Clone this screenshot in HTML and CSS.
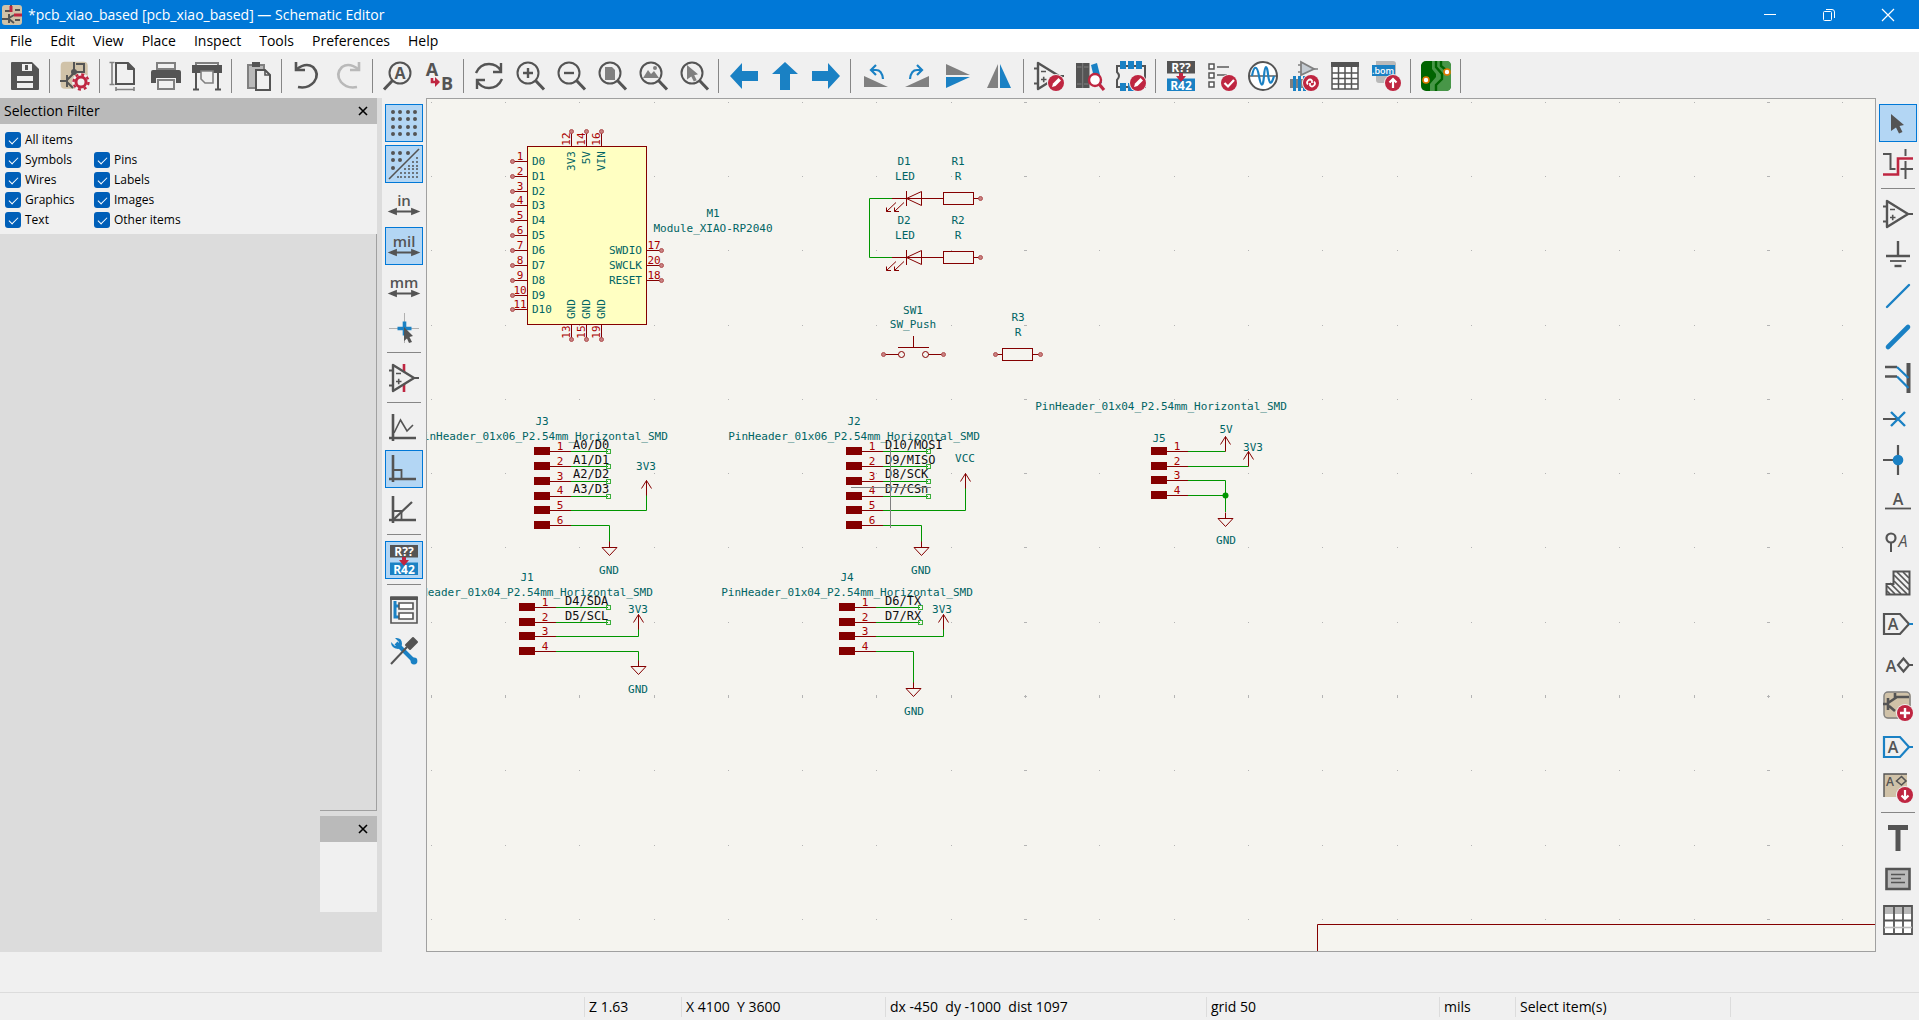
FILE: index.html
```html
<!DOCTYPE html>
<html lang="en">
<head>
<meta charset="utf-8">
<title>*pcb_xiao_based [pcb_xiao_based] — Schematic Editor</title>
<link rel="stylesheet" href="styles.css">
</head>
<body>
<svg class="sprite" aria-hidden="true">
  <defs>
    <g id="lens"><circle cx="13" cy="12" r="10.5" fill="none" stroke="#545454" stroke-width="2"/><path d="M20.5 19.5L29 28.5" stroke="#545454" stroke-width="3"/></g>
    <g id="opamp"><path d="M4 2V28L25 15Z" fill="none" stroke="#545454" stroke-width="2.4" stroke-linejoin="round"/><path d="M0 7.500H4M0 22.500H4M25 15H30" stroke="#545454" stroke-width="1.800"/><path d="M7 10.500H12M7 18.500H12.500M9.700 15.800V21.300" stroke="#545454" stroke-width="1.600"/></g>
    <g id="annotate"><rect x="1" y="0" width="28" height="12.500" fill="#545454"/><rect x="1" y="17.500" width="28" height="12.500" fill="#1a81c4"/><text x="15" y="11" class="ic-tag">R??</text><text x="15" y="29" class="ic-tag">R42</text><path d="M13 12H17V15H20L15 21L10 15H13Z" fill="#bf2641"/></g>
    <g id="badge"><circle cx="22" cy="22" r="9" fill="#f0f0f0"/><circle cx="22" cy="22" r="8" fill="#bf2641"/></g>
    <g id="pencil"><path d="M18 26L19 22.500L24.500 17L27 19.500L21.500 25Z" fill="#fff"/></g>
    <g id="sheet"><rect x="0.700" y="0.700" width="27" height="27" rx="4" fill="#d0c2a8"/></g>
    <path id="pointer" d="M0 0L13 11L8.500 12L11.500 18L8 19.500L5 13.500L0 17Z"/>
    <path id="axes" d="M4 1V28M0 25H27" fill="none" stroke="#545454" stroke-width="2.600"/>
    <path id="span" d="M5 21.500H25M7 19L1 21.500L7 24ZM23 19L29 21.500L23 24Z" fill="#545454" stroke="#545454" stroke-width="1.800"/>

    <g id="power" class="part"><path d="M0 15V0M-5 8L0 0L5 8"/></g>
    <g id="ground" class="part"><path d="M0 -6V0M-7.500 0H7.500L0 8Z"/></g>
    <g id="pin-end"><circle r="2" class="pin-end"/></g>
    <g id="pad"><rect x="-37" y="-4.500" width="16" height="8" fill="#840000"/><path class="part" d="M-21 0H0"/></g>
    <rect id="net-end" x="-1.500" y="-2" width="4" height="4" class="net-end"/>
    <g id="led" class="part"><path d="M0 0H51M14.500 -7.500V7.500M14.500 0L29.500 -7V7ZM4 4L-5.500 13M-5.500 9V13H-1M12 4L2.500 13M2.500 9V13H7"/><rect x="51.500" y="-6" width="30" height="12"/><path d="M82 0H88.500"/></g>
  </defs>
</svg>

<header class="titlebar">
  <svg class="app-icon" width="20" height="20" viewBox="0 0 20 20"><rect width="20" height="20" rx="3" fill="#d0c2a8"/><path d="M9 0V6H3M0 14H7M7 9V18M7 13L12 10M7 14L12 18" stroke="#545454" stroke-width="2" fill="none"/><path d="M9 1V7M12 10H20" stroke="#bf2641" stroke-width="3"/><path d="M13 5H18M13 15H18" stroke="#545454" stroke-width="2"/></svg>
  <h1 class="title">*pcb_xiao_based [pcb_xiao_based] — Schematic Editor</h1>
  <button class="win" aria-label="Minimize"><svg width="14" height="14"><path d="M1 6.500H13" stroke="#fff"/></svg></button>
  <button class="win" aria-label="Restore"><svg width="14" height="14" fill="none" stroke="#fff"><rect x="1.500" y="3.500" width="8" height="9" rx="1"/><path d="M4 1.500H10Q12.500 1.500 12.500 4V10"/></svg></button>
  <button class="win" aria-label="Close"><svg width="14" height="14"><path d="M1 1L13 13M13 1L1 13" stroke="#fff" stroke-width="1.200"/></svg></button>
</header>

<nav class="menubar">
  <button>File</button><button>Edit</button><button>View</button><button>Place</button><button>Inspect</button><button>Tools</button><button>Preferences</button><button>Help</button>
</nav>

<div class="toolbar" role="toolbar" aria-label="Main">
  <button class="tool" aria-label="Save"><svg class="ic" viewBox="0 0 30 30"><path d="M1 2Q1 1 2 1H22L29 8V28Q29 29 28 29H2Q1 29 1 28Z" fill="#545454"/><path d="M12 3H22V10H12Z" fill="#f0f0f0"/><path d="M15 4H18V9H15Z" fill="#545454"/><path d="M7 15H23V20H7ZM7 22H23V27H7Z" fill="#f0f0f0"/></svg></button>
  <i class="sep"></i>
  <button class="tool" aria-label="Schematic setup"><svg class="ic" viewBox="0 0 30 30"><use href="#sheet"/><path d="M14 1V11M14 11H24V3H16M7 14V26M0 20H7M7 19L14 12M7 21L13 27" stroke="#545454" stroke-width="2" fill="none"/><circle cx="14" cy="11" r="3" fill="#545454"/><circle cx="21" cy="21" r="7" fill="#f0f0f0" stroke="#f0f0f0" stroke-width="4"/><circle cx="21" cy="21" r="5" fill="none" stroke="#bf2641" stroke-width="3"/><circle cx="21" cy="21" r="7.500" fill="none" stroke="#bf2641" stroke-width="2.400" stroke-dasharray="3 2.890"/></svg></button>
  <i class="sep"></i>
  <button class="tool" aria-label="Page settings"><svg class="ic" viewBox="0 0 30 30" fill="none" stroke="#545454"><path d="M6 2H18L24 8V23H6Z" stroke-width="2"/><path d="M17.500 2V8.500H24" fill="#545454"/><path d="M2 1.500V23.500M-0.500 1.500H4.500M-0.500 23.500H4.500M6 28.500H24M6 26V30M24 26V30" stroke="#808080" stroke-width="1.600"/></svg></button>
  <button class="tool" aria-label="Print"><svg class="ic" viewBox="0 0 30 30"><path d="M6 2H24V8H6Z" fill="none" stroke="#808080" stroke-width="2"/><path d="M2 9H28Q30 9 30 11V22H25V17H5V22H0V11Q0 9 2 9Z" fill="#545454"/><path d="M7 19H23V28H7Z" fill="#f0f0f0" stroke="#808080" stroke-width="2"/></svg></button>
  <button class="tool" aria-label="Plot"><svg class="ic" viewBox="0 0 30 30"><path d="M4 4V2H26V4" fill="none" stroke="#808080" stroke-width="2"/><path d="M0 4H30V12H0Z" fill="#545454"/><path d="M4 12V28M26 12V28M1 28.500H7M23 28.500H29" stroke="#545454" stroke-width="2"/><path d="M9 10H21V22H13L9 18Z" fill="#f0f0f0" stroke="#808080" stroke-width="1.600"/></svg></button>
  <i class="sep"></i>
  <button class="tool" aria-label="Paste"><svg class="ic" viewBox="0 0 30 30"><path d="M6 4H22V27H6Z" fill="#b9b9b9" stroke="#808080" stroke-width="2"/><path d="M10 1H18V6H10Z" fill="#545454"/><path d="M14 9H23L28 14V29H14Z" fill="#f0f0f0" stroke="#545454" stroke-width="2"/><path d="M23 9V14H28" fill="none" stroke="#545454" stroke-width="1.600"/></svg></button>
  <i class="sep"></i>
  <button class="tool" aria-label="Undo"><svg class="ic" viewBox="0 0 30 30" fill="none" stroke="#545454" stroke-width="2.600"><path d="M4 1V9H13"/><path d="M4 8.500Q14 1 21 6Q28 13 22 21Q16 28 6 26"/></svg></button>
  <button class="tool" aria-label="Redo" disabled><svg class="ic" viewBox="0 0 30 30" fill="none" stroke="#b9b9b9" stroke-width="2.600"><path d="M26 1V9H17"/><path d="M26 8.500Q16 1 9 6Q2 13 8 21Q14 28 24 26"/></svg></button>
  <i class="sep"></i>
  <button class="tool" aria-label="Find"><svg class="ic" viewBox="0 0 30 30"><g transform="matrix(-1 0 0 1 30 0)"><use href="#lens"/></g><text x="17" y="18" class="ic-letter heavy">A</text></svg></button>
  <button class="tool" aria-label="Find and replace"><svg class="ic" viewBox="0 0 30 30"><text x="8" y="15" class="ic-big">A</text><text x="23" y="29" class="ic-big">B</text><path d="M8 17V21H13" stroke="#bf2641" stroke-width="2.600" fill="none"/><path d="M11 16L16 21L11 26Z" fill="#bf2641"/></svg></button>
  <i class="sep"></i>
  <button class="tool" aria-label="Refresh"><svg class="ic" viewBox="0 0 30 30" fill="none" stroke="#545454" stroke-width="2.400"><path d="M2 12Q6 3 15 3Q23 3 27 10M27 2V11H19M28 18Q24 27 15 27Q7 27 3 20M3 28V19H11"/></svg></button>
  <button class="tool" aria-label="Zoom in"><svg class="ic" viewBox="0 0 30 30"><use href="#lens"/><path d="M8 12H18M13 7V17" stroke="#545454" stroke-width="2.400"/></svg></button>
  <button class="tool" aria-label="Zoom out"><svg class="ic" viewBox="0 0 30 30"><use href="#lens"/><path d="M8 12H18" stroke="#545454" stroke-width="2.400"/></svg></button>
  <button class="tool" aria-label="Zoom to fit"><svg class="ic" viewBox="0 0 30 30"><path d="M8 6H15L18 9V19H8Z" fill="#808080"/><use href="#lens"/></svg></button>
  <button class="tool" aria-label="Zoom to objects"><svg class="ic" viewBox="0 0 30 30"><path d="M5 17L10 9L13 13L16 10L21 17Z" fill="#808080"/><circle cx="17" cy="7" r="2" fill="#808080"/><use href="#lens"/></svg></button>
  <button class="tool" aria-label="Zoom to selection"><svg class="ic" viewBox="0 0 30 30"><use href="#pointer" transform="translate(8 4) scale(.85)" fill="#808080"/><use href="#lens"/></svg></button>
  <i class="sep"></i>
  <button class="tool" aria-label="Navigate back"><svg class="ic" viewBox="0 0 30 30"><path d="M1 15L13 2V10H29V20H13V28Z" fill="#1a81c4"/></svg></button>
  <button class="tool" aria-label="Navigate up"><svg class="ic" viewBox="0 0 30 30"><path d="M15 1L28 13H20V29H10V13H2Z" fill="#1a81c4"/></svg></button>
  <button class="tool" aria-label="Navigate forward"><svg class="ic" viewBox="0 0 30 30"><path d="M29 15L17 2V10H1V20H17V28Z" fill="#1a81c4"/></svg></button>
  <i class="sep"></i>
  <button class="tool" aria-label="Rotate left"><svg class="ic" viewBox="0 0 30 30"><path d="M3 15V26H27Z" fill="#808080"/><path d="M10 9H15Q21 9 22 18M15 4L10 9L15 14" fill="none" stroke="#1a81c4" stroke-width="2.200"/></svg></button>
  <button class="tool" aria-label="Rotate right"><svg class="ic" viewBox="0 0 30 30"><path d="M27 15V26H3Z" fill="#808080"/><path d="M20 9H15Q9 9 8 18M15 4L20 9L15 14" fill="none" stroke="#1a81c4" stroke-width="2.200"/></svg></button>
  <button class="tool" aria-label="Mirror vertically"><svg class="ic" viewBox="0 0 30 30"><path d="M3 3L27 14H3Z" fill="#808080"/><path d="M3 16H27L3 27Z" fill="#1a81c4"/></svg></button>
  <button class="tool" aria-label="Mirror horizontally"><svg class="ic" viewBox="0 0 30 30"><path d="M14 3V27H3Z" fill="#808080"/><path d="M16 3V27H27Z" fill="#1a81c4"/></svg></button>
  <i class="sep"></i>
  <button class="tool" aria-label="Symbol editor"><svg class="ic" viewBox="0 0 30 30"><use href="#opamp"/><use href="#badge"/><use href="#pencil"/></svg></button>
  <button class="tool" aria-label="Symbol library browser"><svg class="ic" viewBox="0 0 30 30"><path d="M1 2H14.500V27H1Z" fill="#545454"/><path d="M7.700 2V27M2 6H6.500M9 6H13.500M2 23H6.500M9 23H13.500" stroke="#808080"/><path d="M16 4L22 2L27 22L21 25Z" fill="#1a81c4"/><circle cx="20" cy="19" r="6" fill="#fff" stroke="#bf2641" stroke-width="2.400"/><path d="M24 23L29 29" stroke="#bf2641" stroke-width="3.200"/></svg></button>
  <button class="tool" aria-label="Footprint editor"><svg class="ic" viewBox="0 0 30 30"><path d="M1 5H29V26H1V19Q5 15 1 11Z" fill="none" stroke="#545454" stroke-width="2"/><path d="M4 0H10V8H4ZM12 0H18V8H12ZM20 0H26V8H20ZM4 22H10V30H4ZM12 22H18V30H12Z" fill="#1a81c4"/><use href="#badge"/><use href="#pencil"/></svg></button>
  <i class="sep"></i>
  <button class="tool" aria-label="Annotate"><svg class="ic" viewBox="0 0 30 30"><use href="#annotate"/></svg></button>
  <button class="tool" aria-label="Electrical rules checker"><svg class="ic" viewBox="0 0 30 30"><path d="M2 3H7V8H2ZM2 12H7V17H2ZM2 21H7V26H2Z" fill="#fff" stroke="#545454" stroke-width="1.500"/><path d="M10 6H22M10 14H20" stroke="#808080" stroke-width="2"/><use href="#badge"/><path d="M17.500 22L21 25.500L27 19" fill="none" stroke="#fff" stroke-width="2.200"/></svg></button>
  <button class="tool" aria-label="Simulator"><svg class="ic" viewBox="0 0 30 30"><circle cx="15" cy="15" r="14" fill="#fff" stroke="#545454" stroke-width="2"/><path d="M1 15H29" stroke="#545454" stroke-width="1.400"/><path d="M4 15C6 4 9 4 11 15S15 27 16 15S19 4 20 13S23 26 26 15" fill="none" stroke="#1a81c4" stroke-width="2.200"/></svg></button>
  <button class="tool" aria-label="Assign footprints"><svg class="ic" viewBox="0 0 30 30"><path d="M12 1V14L25 8Z" fill="#c5ccd3" stroke="#808080" stroke-width="1.800"/><path d="M9 4H12M9 11H12M25 8H29" stroke="#808080" stroke-width="1.500"/><path d="M1 18H20V27H1Z" fill="#808080"/><path d="M4 15H7V30H4ZM9 15H12V30H9ZM14 15H17V30H14Z" fill="#1a81c4"/><use href="#badge"/><path d="M19 23.500Q17 21.500 19 19.500Q21 17.500 23 19.500L23 22M25 20.500Q27 22.500 25 24.500Q23 26.500 21 24.500L21 22" fill="none" stroke="#fff" stroke-width="1.700"/></svg></button>
  <button class="tool" aria-label="Symbol fields table"><svg class="ic" viewBox="0 0 30 30"><path d="M2 2H28V28H2Z" fill="#fff"/><path d="M1 1H29V6H1Z" fill="#545454"/><path d="M2 6V28H28V6M2 12H28M2 17.500H28M2 23H28M8.500 6V28M15 6V28M21.500 6V28" fill="none" stroke="#545454" stroke-width="1.500"/></svg></button>
  <button class="tool" aria-label="Bill of materials"><svg class="ic" viewBox="0 0 30 30"><path d="M5 0H22Q25 0 25 3V22H8Q5 22 5 19Z" fill="#b9b9b9"/><path d="M1 4H24V15H1Z" fill="#1a81c4"/><text x="12" y="13" class="ic-bom">.bom</text><use href="#badge"/><path d="M22 27V18M18.500 21.500L22 18L25.500 21.500" fill="none" stroke="#fff" stroke-width="2.200"/></svg></button>
  <i class="sep"></i>
  <button class="tool" aria-label="PCB editor"><svg class="ic" viewBox="0 0 30 30"><rect width="30" height="30" rx="5" fill="#006400"/><path d="M15 0H26Q30 0 30 5V25Q30 30 25 30H9V23L15 16V13L11 8V0Z" fill="#489648"/><path d="M15 0V6L21 13V18L15 24V30M20 0V5L25 9M0 5H5L9 10V14" fill="none" stroke="#006400" stroke-width="2.400"/><circle cx="26" cy="11" r="3" fill="#fff" stroke="#e07800" stroke-width="1.600"/><circle cx="5" cy="19" r="3" fill="#fff" stroke="#e07800" stroke-width="1.600"/></svg></button>
  <i class="sep"></i>
</div>

<main class="workspace">
  <aside class="dock">
    <section class="pane">
      <header class="pane-head"><h2>Selection Filter</h2><button class="close" aria-label="Close selection filter"><svg width="10" height="10"><path d="M1 1L9 9M9 1L1 9" stroke="#000" stroke-width="1.600"/></svg></button></header>
      <div class="filters">
        <label class="wide"><input type="checkbox" checked>All items</label>
        <label><input type="checkbox" checked>Symbols</label><label><input type="checkbox" checked>Pins</label>
        <label><input type="checkbox" checked>Wires</label><label><input type="checkbox" checked>Labels</label>
        <label><input type="checkbox" checked>Graphics</label><label><input type="checkbox" checked>Images</label>
        <label><input type="checkbox" checked>Text</label><label><input type="checkbox" checked>Other items</label>
      </div>
    </section>
    <div class="dock-fill"></div>
    <section class="pane mini">
      <header class="pane-head"><button class="close" aria-label="Close pane"><svg width="10" height="10"><path d="M1 1L9 9M9 1L1 9" stroke="#000" stroke-width="1.600"/></svg></button></header>
      <div class="mini-body"></div>
    </section>
  </aside>

  <div class="toolcol" role="toolbar" aria-label="Options">
    <button class="tool on" aria-label="Grid"><svg class="ic" viewBox="0 0 30 30"><path class="dots" d="M4 4h0M11 4h0M19 4h0M26 4h0M4 11h0M11 11h0M19 11h0M26 11h0M4 19h0M11 19h0M19 19h0M26 19h0M4 26h0M11 26h0M19 26h0M26 26h0"/></svg></button>
    <button class="tool on" aria-label="Grid overrides"><svg class="ic" viewBox="0 0 30 30"><path class="dots" d="M4 4h0M11 4h0M19 4h0M4 11h0M11 11h0M4 19h0"/><path d="M30 0L0 30" stroke="#545454" stroke-width="1.600"/><path class="dots small" d="M28 9h0M24 13h0M28 13h0M20 17h0M24 17h0M28 17h0M16 20h0M20 20h0M24 20h0M28 20h0M12 24h0M16 24h0M20 24h0M24 24h0M28 24h0M9 28h0M12 28h0M16 28h0M20 28h0M24 28h0M28 28h0"/></svg></button>
    <button class="tool" aria-label="Inches"><svg class="ic" viewBox="0 0 30 30"><text x="15" y="16" class="ic-unit">in</text><use href="#span"/></svg></button>
    <button class="tool on" aria-label="Mils"><svg class="ic" viewBox="0 0 30 30"><text x="15" y="16" class="ic-unit">mil</text><use href="#span"/></svg></button>
    <button class="tool" aria-label="Millimeters"><svg class="ic" viewBox="0 0 30 30"><text x="15" y="16" class="ic-unit">mm</text><use href="#span"/></svg></button>
    <button class="tool" aria-label="Full-window crosshair"><svg class="ic" viewBox="0 0 30 30"><path d="M0 15.500H30M15.500 0V30" stroke="#b0b0b0"/><path d="M8.500 15.500H22.500M15.500 8.500V22.500" stroke="#1a81c4" stroke-width="3.600"/><path d="M15 14L24 23L20.500 24L23 29L20 30L18 25.500L15 28Z" fill="#545454"/></svg></button>
    <i class="sep"></i>
    <button class="tool" aria-label="Hidden pins"><svg class="ic" viewBox="0 0 30 30"><path d="M15 1V9M15 21V29" stroke="#bf2641" stroke-width="2.600"/><use href="#opamp"/></svg></button>
    <i class="sep"></i>
    <button class="tool" aria-label="Free angle"><svg class="ic" viewBox="0 0 30 30"><use href="#axes"/><path d="M5 20L11.500 7L18 18L24 12" fill="none" stroke="#545454" stroke-width="1.600"/></svg></button>
    <button class="tool on" aria-label="Right angle"><svg class="ic" viewBox="0 0 30 30"><use href="#axes"/><path d="M4 16H12.500V25" fill="none" stroke="#545454" stroke-width="1.800"/></svg></button>
    <button class="tool" aria-label="45 degree angle"><svg class="ic" viewBox="0 0 30 30"><use href="#axes"/><path d="M4 16H12.500V25" fill="none" stroke="#545454" stroke-width="1.800"/><path d="M4 25L23 7" stroke="#545454" stroke-width="2.200"/></svg></button>
    <i class="sep"></i>
    <button class="tool on" aria-label="Annotate automatically"><svg class="ic" viewBox="0 0 30 30"><use href="#annotate"/></svg></button>
    <i class="sep"></i>
    <button class="tool" aria-label="Hierarchy navigator"><svg class="ic" viewBox="0 0 30 30"><path d="M2 2H28V28H2Z" fill="#f0f0f0" stroke="#545454" stroke-width="1.600"/><path d="M1 2H29V5H1Z" fill="#545454"/><path d="M6 6V22H10M6 11H10" fill="none" stroke="#1a81c4" stroke-width="3"/><path d="M10 8H24V14H10ZM10 18H24V24H10Z" fill="#fff" stroke="#545454" stroke-width="1.600"/></svg></button>
    <button class="tool" aria-label="Properties"><svg class="ic" viewBox="0 0 30 30"><path d="M7 7L25 25" stroke="#1a81c4" stroke-width="4"/><path d="M2 6L6 10L9 9L10 6L6 2Q13 1 13 8L12 12L9 13Q2 12 2 6Z" fill="#1a81c4"/><circle cx="25" cy="25" r="3.400" fill="#1a81c4"/><path d="M2 28L18 11" stroke="#545454" stroke-width="2"/><path d="M17 9L24 2L28 6L21 13Z" fill="#545454" stroke="#545454" stroke-width="2" stroke-linejoin="round"/></svg></button>
  </div>

  <div class="canvas">
    <svg class="sheet" width="100%" height="100%">
      <g transform="translate(-427 -99)">
        <path id="grid" class="grid"/>
        <path class="part" d="M1317.500 952V924.500H4000"/>

        <!-- M1 -->
        <rect x="527.500" y="146.500" width="119" height="178" fill="#ffffc2" stroke="#840000"/>
        <path class="part" d="M512.500 161.500h15M512.500 176.500h15M512.500 191.500h15M512.500 205.500h15M512.500 220.500h15M512.500 235.500h15M512.500 250.500h15M512.500 265.500h15M512.500 280.500h15M512.500 295.500h15M512.500 309.500h15M647 250.500h15M647 265.500h15M647 280.500h15M571.500 131.500v15M586.500 131.500v15M601.500 131.500v15M571.500 324.500v15M586.500 324.500v15M601.500 324.500v15"/>
        <g>
          <use href="#pin-end" x="512.500" y="161.500"/><use href="#pin-end" x="512.500" y="176.500"/><use href="#pin-end" x="512.500" y="191.500"/><use href="#pin-end" x="512.500" y="205.500"/><use href="#pin-end" x="512.500" y="220.500"/><use href="#pin-end" x="512.500" y="235.500"/><use href="#pin-end" x="512.500" y="250.500"/><use href="#pin-end" x="512.500" y="265.500"/><use href="#pin-end" x="512.500" y="280.500"/><use href="#pin-end" x="512.500" y="295.500"/><use href="#pin-end" x="512.500" y="309.500"/>
          <use href="#pin-end" x="661.500" y="250.500"/><use href="#pin-end" x="661.500" y="265.500"/><use href="#pin-end" x="661.500" y="280.500"/>
          <use href="#pin-end" x="571.500" y="131.500"/><use href="#pin-end" x="586.500" y="131.500"/><use href="#pin-end" x="601.500" y="131.500"/>
          <use href="#pin-end" x="571.500" y="339.500"/><use href="#pin-end" x="586.500" y="339.500"/><use href="#pin-end" x="601.500" y="339.500"/>
        </g>
        <g class="num">
          <text x="520" y="160">1</text><text x="520" y="175">2</text><text x="520" y="190">3</text><text x="520" y="204">4</text><text x="520" y="219">5</text><text x="520" y="234">6</text><text x="520" y="249">7</text><text x="520" y="264">8</text><text x="520" y="279">9</text><text x="520" y="294">10</text><text x="520" y="308">11</text>
          <text x="654" y="249">17</text><text x="654" y="264">20</text><text x="654" y="279">18</text>
          <text transform="translate(570 139) rotate(-90)">12</text><text transform="translate(585 139) rotate(-90)">14</text><text transform="translate(600 139) rotate(-90)">16</text>
          <text transform="translate(570 332) rotate(-90)">13</text><text transform="translate(585 332) rotate(-90)">15</text><text transform="translate(600 332) rotate(-90)">19</text>
        </g>
        <g class="field left">
          <text x="532" y="165">D0</text><text x="532" y="180">D1</text><text x="532" y="195">D2</text><text x="532" y="209">D3</text><text x="532" y="224">D4</text><text x="532" y="239">D5</text><text x="532" y="254">D6</text><text x="532" y="269">D7</text><text x="532" y="284">D8</text><text x="532" y="299">D9</text><text x="532" y="313">D10</text>
          <text transform="translate(575 319) rotate(-90)">GND</text><text transform="translate(590 319) rotate(-90)">GND</text><text transform="translate(605 319) rotate(-90)">GND</text>
        </g>
        <g class="field right">
          <text x="642" y="254">SWDIO</text><text x="642" y="269">SWCLK</text><text x="642" y="284">RESET</text>
          <text transform="translate(575 151) rotate(-90)">3V3</text><text transform="translate(590 151) rotate(-90)">5V</text><text transform="translate(605 151) rotate(-90)">VIN</text>
        </g>
        <g class="field"><text x="713" y="217">M1</text><text x="713" y="232">Module_XIAO-RP2040</text></g>

        <!-- LEDs, switch and resistors -->
        <path class="wire" d="M892 198.500H869.500V257.500H892"/>
        <use href="#led" x="892" y="198.500"/><use href="#led" x="892" y="257.500"/>
        <use href="#pin-end" x="980.500" y="198.500"/><use href="#pin-end" x="980.500" y="257.500"/>
        <g class="part"><path d="M913.500 336V347.500M898 347.500H929M883.500 354.500H898.500M928.500 354.500H943.500M995.500 354.500H1002.500M1032.500 354.500H1040.500"/><circle cx="901.500" cy="354.500" r="3"/><circle cx="925.500" cy="354.500" r="3"/><rect x="1002.500" y="348.500" width="30" height="12"/></g>
        <use href="#pin-end" x="883.500" y="354.500"/><use href="#pin-end" x="943.500" y="354.500"/><use href="#pin-end" x="995.500" y="354.500"/><use href="#pin-end" x="1040.500" y="354.500"/>
        <g class="field">
          <text x="904" y="165">D1</text><text x="905" y="180">LED</text><text x="958" y="165">R1</text><text x="958" y="180">R</text>
          <text x="904" y="224">D2</text><text x="905" y="239">LED</text><text x="958" y="224">R2</text><text x="958" y="239">R</text>
          <text x="913" y="314">SW1</text><text x="913" y="328">SW_Push</text><text x="1018" y="321">R3</text><text x="1018" y="336">R</text>
        </g>

        <!-- J3 -->
        <use href="#pad" x="571" y="451.500"/><use href="#pad" x="571" y="466.500"/><use href="#pad" x="571" y="481.500"/><use href="#pad" x="571" y="496.500"/><use href="#pad" x="571" y="510.500"/><use href="#pad" x="571" y="525.500"/>
        <path class="wire" d="M571 451.500H608M571 466.500H608M571 481.500H608M571 496.500H608M571 510.500H646.500V495M571 525.500H609.500V542"/>
        <use href="#net-end" x="608" y="451.500"/><use href="#net-end" x="608" y="466.500"/><use href="#net-end" x="608" y="481.500"/><use href="#net-end" x="608" y="496.500"/>
        <use href="#power" x="646.500" y="480.500"/><use href="#ground" x="609.500" y="547.500"/>
        <g class="num"><text x="560" y="450">1</text><text x="560" y="465">2</text><text x="560" y="480">3</text><text x="560" y="494">4</text><text x="560" y="509">5</text><text x="560" y="524">6</text></g>
        <g class="field"><text x="542" y="425">J3</text><text x="542" y="440">PinHeader_01x06_P2.54mm_Horizontal_SMD</text><text x="646" y="470">3V3</text><text x="609" y="574">GND</text></g>
        <g class="net"><text x="573" y="449">A0/D0</text><text x="573" y="464">A1/D1</text><text x="573" y="478">A2/D2</text><text x="573" y="493">A3/D3</text></g>

        <!-- J1 -->
        <use href="#pad" x="556" y="607.500"/><use href="#pad" x="556" y="622.500"/><use href="#pad" x="556" y="636.500"/><use href="#pad" x="556" y="651.500"/>
        <path class="wire" d="M556 607.500H608M556 622.500H608M556 636.500H638.500V629M556 651.500H638.500V661"/>
        <use href="#net-end" x="608" y="607.500"/><use href="#net-end" x="608" y="622.500"/>
        <use href="#power" x="638.500" y="614.500"/><use href="#ground" x="638.500" y="666.500"/>
        <g class="num"><text x="545" y="606">1</text><text x="545" y="621">2</text><text x="545" y="635">3</text><text x="545" y="650">4</text></g>
        <g class="field"><text x="527" y="581">J1</text><text x="527" y="596">PinHeader_01x04_P2.54mm_Horizontal_SMD</text><text x="638" y="613">3V3</text><text x="638" y="693">GND</text></g>
        <g class="net"><text x="565" y="605">D4/SDA</text><text x="565" y="620">D5/SCL</text></g>

        <!-- J2 -->
        <use href="#pad" x="883" y="451.500"/><use href="#pad" x="883" y="466.500"/><use href="#pad" x="883" y="481.500"/><use href="#pad" x="883" y="496.500"/><use href="#pad" x="883" y="510.500"/><use href="#pad" x="883" y="525.500"/>
        <path class="wire" d="M883 451.500H928M883 466.500H928M883 481.500H928M883 496.500H928M883 510.500H965.500V488M883 525.500H921.500V542"/>
        <use href="#net-end" x="928" y="451.500"/><use href="#net-end" x="928" y="466.500"/><use href="#net-end" x="928" y="481.500"/><use href="#net-end" x="928" y="496.500"/>
        <use href="#power" x="965.500" y="473.500"/><use href="#ground" x="921.500" y="547.500"/>
        <g class="num"><text x="872" y="450">1</text><text x="872" y="465">2</text><text x="872" y="480">3</text><text x="872" y="494">4</text><text x="872" y="509">5</text><text x="872" y="524">6</text></g>
        <g class="field"><text x="854" y="425">J2</text><text x="854" y="440">PinHeader_01x06_P2.54mm_Horizontal_SMD</text><text x="965" y="462">VCC</text><text x="921" y="574">GND</text></g>
        <g class="net"><text x="885" y="449">D10/MOSI</text><text x="885" y="464">D9/MISO</text><text x="885" y="478">D8/SCK</text><text x="885" y="493">D7/CSn</text></g>

        <!-- J4 -->
        <use href="#pad" x="876" y="607.500"/><use href="#pad" x="876" y="622.500"/><use href="#pad" x="876" y="636.500"/><use href="#pad" x="876" y="651.500"/>
        <path class="wire" d="M876 607.500H920M876 622.500H920M876 636.500H943.500V629M876 651.500H913.500V683"/>
        <use href="#net-end" x="920" y="607.500"/><use href="#net-end" x="920" y="622.500"/>
        <use href="#power" x="943.500" y="614.500"/><use href="#ground" x="913.500" y="688.500"/>
        <g class="num"><text x="865" y="606">1</text><text x="865" y="621">2</text><text x="865" y="635">3</text><text x="865" y="650">4</text></g>
        <g class="field"><text x="847" y="581">J4</text><text x="847" y="596">PinHeader_01x04_P2.54mm_Horizontal_SMD</text><text x="942" y="613">3V3</text><text x="914" y="715">GND</text></g>
        <g class="net"><text x="885" y="605">D6/TX</text><text x="885" y="620">D7/RX</text></g>

        <!-- J5 -->
        <use href="#pad" x="1188" y="451.500"/><use href="#pad" x="1188" y="466.500"/><use href="#pad" x="1188" y="480.500"/><use href="#pad" x="1188" y="495.500"/>
        <path class="wire" d="M1188 451.500H1225.500M1188 466.500H1248.500M1188 480.500H1225.500V512M1188 495.500H1225.500"/>
        <circle cx="1225.500" cy="495.500" r="3" fill="#009600"/>
        <use href="#power" x="1225.500" y="436.500"/><use href="#power" x="1248.500" y="451.500"/><use href="#ground" x="1225.500" y="518.500"/>
        <g class="num"><text x="1177" y="450">1</text><text x="1177" y="465">2</text><text x="1177" y="479">3</text><text x="1177" y="494">4</text></g>
        <g class="field"><text x="1159" y="442">J5</text><text x="1161" y="410">PinHeader_01x04_P2.54mm_Horizontal_SMD</text><text x="1226" y="433">5V</text><text x="1253" y="451">3V3</text><text x="1226" y="544">GND</text></g>

        <path class="cursor" d="M851 487.500H931M890.500 447V528"/>
      </g>
    </svg>
  </div>

  <div class="toolcol right" role="toolbar" aria-label="Drawing tools">
    <button class="tool on" aria-label="Select"><svg class="ic" viewBox="0 0 30 30"><use href="#pointer" transform="translate(8 6)" fill="#545454"/></svg></button>
    <button class="tool" aria-label="Highlight net"><svg class="ic" viewBox="0 0 30 30" fill="none"><path d="M0 5H7.500V20H30M22.500 0V30" stroke="#545454" stroke-width="2"/><path d="M0 25.500H15V9.500H30" stroke="#f0f0f0" stroke-width="5"/><path d="M0 25.500H15V9.500H30" stroke="#bf2641" stroke-width="2.600"/></svg></button>
    <i class="sep"></i>
    <button class="tool" aria-label="Place symbol"><svg class="ic" viewBox="0 0 30 30"><use href="#opamp"/></svg></button>
    <button class="tool" aria-label="Place power"><svg class="ic" viewBox="0 0 30 30" stroke="#545454"><path d="M15 1V15M3 16H27" stroke-width="2.400"/><path d="M7 21H23" stroke-width="1.800"/><path d="M11.500 26H18.500" stroke-width="2.400"/></svg></button>
    <button class="tool" aria-label="Draw wire"><svg class="ic" viewBox="0 0 30 30"><path d="M4 26L26 4" stroke="#1a81c4" stroke-width="2.400" stroke-linecap="round"/></svg></button>
    <button class="tool" aria-label="Draw bus"><svg class="ic" viewBox="0 0 30 30"><path d="M5 25L25 5" stroke="#1a81c4" stroke-width="4.600" stroke-linecap="round"/></svg></button>
    <button class="tool" aria-label="Bus entry"><svg class="ic" viewBox="0 0 30 30" fill="none"><path d="M2 4H14M2 13.500H14" stroke="#545454" stroke-width="2.400"/><path d="M25.500 0V30" stroke="#545454" stroke-width="4"/><path d="M14 4L25.500 15M14 13.500L25.500 25" stroke="#1a81c4" stroke-width="2.200"/></svg></button>
    <button class="tool" aria-label="No-connect flag"><svg class="ic" viewBox="0 0 30 30"><path d="M0 15H15" stroke="#545454" stroke-width="2"/><path d="M8 8L22 22M22 8L8 22" stroke="#1a81c4" stroke-width="2.400"/></svg></button>
    <button class="tool" aria-label="Junction"><svg class="ic" viewBox="0 0 30 30"><path d="M0 15H15M15 0V30" stroke="#545454" stroke-width="2.200"/><circle cx="15" cy="15" r="5.300" fill="#1a81c4"/></svg></button>
    <button class="tool" aria-label="Net label"><svg class="ic" viewBox="0 0 30 30"><text x="15" y="19" class="ic-letter">A</text><path d="M2 22.500H28" stroke="#545454" stroke-width="1.800"/></svg></button>
    <button class="tool" aria-label="Net class directive"><svg class="ic" viewBox="0 0 30 30"><circle cx="8" cy="11" r="4.500" fill="none" stroke="#545454" stroke-width="2.200"/><path d="M8 16V25" stroke="#545454" stroke-width="2"/><text x="20" y="20" class="ic-letter slant">A</text></svg></button>
    <button class="tool" aria-label="Rule area"><svg class="ic" viewBox="0 0 30 30" fill="none" stroke="#545454"><path d="M3.500 26.500V16H10.500V3.500H26.500V26.500Z" stroke-width="2"/><path d="M20 4L26 10M14 4L26 16M11 7L26 22M11 13L24 26M4 18L12 26M7 15L18 26M4 23L7 26" stroke-width="1.700"/></svg></button>
    <button class="tool" aria-label="Global label"><svg class="ic" viewBox="0 0 30 30"><path d="M1 5H17L26 15L17 25H1Z" fill="none" stroke="#545454" stroke-width="2.200"/><path d="M26 15H30" stroke="#1a81c4" stroke-width="2"/><text x="10" y="21" class="ic-letter">A</text></svg></button>
    <button class="tool" aria-label="Hierarchical label"><svg class="ic" viewBox="0 0 30 30"><text x="8" y="22" class="ic-letter">A</text><path d="M15 15L20.500 8.500L26 15L20.500 21.500ZM26 15H30" fill="none" stroke="#545454" stroke-width="2.200"/></svg></button>
    <button class="tool" aria-label="Add sheet"><svg class="ic" viewBox="0 0 30 30"><use href="#sheet"/><rect x="1" y="1" width="26" height="26" rx="4" fill="none" stroke="#808080" stroke-width="1.400"/><path d="M12 2V6H26M5 7V19M0 13H5M5 12L14 6M6 15L12 20" stroke="#545454" stroke-width="2.600" fill="none"/><use href="#badge"/><path d="M17 22H27M22 17V27" stroke="#fff" stroke-width="2.400"/></svg></button>
    <button class="tool" aria-label="Sheet pin"><svg class="ic" viewBox="0 0 30 30"><path d="M1 5H17L26 15L17 25H1Z" fill="none" stroke="#1a81c4" stroke-width="2.200"/><path d="M26 15H30" stroke="#1a81c4" stroke-width="2"/><text x="10" y="21" class="ic-letter">A</text></svg></button>
    <button class="tool" aria-label="Import sheet pins"><svg class="ic" viewBox="0 0 30 30"><path d="M1 24V1H24V24Z" fill="#d0c2a8"/><path d="M1 24V1H24" fill="none" stroke="#545454" stroke-width="1.400"/><text x="7" y="13" class="ic-small">A</text><path d="M13.500 8L18.500 3.500L23 8L18.500 12Z" fill="none" stroke="#545454" stroke-width="1.600"/><use href="#badge"/><path d="M22 17V26M18.500 22.500L22 26L25.500 22.500" fill="none" stroke="#fff" stroke-width="2.200"/></svg></button>
    <i class="sep"></i>
    <button class="tool" aria-label="Text"><svg class="ic" viewBox="0 0 30 30"><path d="M5 2H25V7H17.500V28H12.500V7H5Z" fill="#545454"/></svg></button>
    <button class="tool" aria-label="Text box"><svg class="ic" viewBox="0 0 30 30"><path d="M3.500 5H26.500V25H3.500Z" fill="#b9b9b9" stroke="#545454" stroke-width="2.600"/><path d="M8 10.500H22M8 14.500H18M8 18.500H22" stroke="#545454" stroke-width="1.600"/></svg></button>
    <button class="tool" aria-label="Table"><svg class="ic" viewBox="0 0 30 30"><path d="M1 1H29V29H1Z" fill="#fff"/><path d="M1 1H29V9H1Z" fill="#b9b9b9"/><path d="M1 1H29V29H1ZM11 1V29M20 1V29M1 15.500H29" fill="none" stroke="#545454" stroke-width="1.800"/><path d="M1 22.500H29" stroke="#b9b9b9" stroke-width="1.600"/></svg></button>
  </div>
</main>

<div class="messages"></div>
<footer class="status">
  <span></span><span>Z 1.63</span><span>X 4100&nbsp; Y 3600</span><span>dx -450&nbsp; dy -1000&nbsp; dist 1097</span><span>grid 50</span><span>mils</span><span>Select item(s)</span><span></span>
</footer>
<script src="grid.js"></script>
</body>
</html>
```
FILE: styles.css
```css
* { box-sizing: border-box; }
body {
  margin: 0;
  height: 100vh;
  display: flex;
  flex-direction: column;
  background: #f0f0f0;
  color: #000;
  font: 14px/20px "Open Sans", "Noto Sans", sans-serif;
  overflow: hidden;
}
button { font: inherit; color: inherit; border: 0; padding: 0; background: none; }
.sprite { position: absolute; width: 0; height: 0; }

.titlebar { flex: none; height: 29px; display: flex; align-items: center; background: #0078d7; color: #fff; padding-left: 2px; }
.app-icon { flex: none; margin-right: 6px; }
.title { flex: 1; margin: 0; font-size: 14px; font-weight: 400; white-space: nowrap; }
.win { width: 59px; height: 29px; display: flex; align-items: center; justify-content: center; }
.win:last-child { margin-right: 2px; }

.menubar { flex: none; height: 23px; display: flex; background: #fff; padding: 1px 1px 0; }
.menubar button { padding: 0 9px; }

.toolbar { flex: none; height: 46px; display: flex; gap: 3px; padding: 5px 6px 3px; }
.toolcol { flex: none; width: 44px; display: flex; flex-direction: column; gap: 3px; padding: 6px 3px; }
.toolcol.right { width: 43px; }
.tool { flex: none; width: 38px; height: 38px; display: flex; align-items: center; justify-content: center; border: 1px solid transparent; }
.tool.on { background: #b3d6f4; border-color: #0078d7; }
.sep { flex: none; background: #868686; }
.toolbar .sep { width: 1px; height: 34px; margin: 2px 3px 2px 2px; }
.toolcol .sep { height: 1px; width: 34px; margin: 2px 2px 3px; }

.ic { width: 30px; height: 30px; display: block; overflow: visible; }
.ic text, .ic-tag { fill: #545454; text-anchor: middle; font-family: "Open Sans", sans-serif; }
.ic-tag { fill: #fff; font-size: 12px; font-weight: 700; }
.ic .ic-bom { fill: #fff; font-size: 9px; font-weight: 600; }
.ic .ic-letter { font-size: 16px; font-weight: 600; }
.ic .ic-letter.heavy { font-weight: 700; }
.ic .ic-small { font-size: 12px; font-weight: 600; }
.ic .ic-big { font-size: 18px; font-weight: 700; }
.ic .ic-unit { font-size: 15px; font-weight: 600; }
.ic .slant { font-style: italic; font-weight: 400; }
.dots { stroke: #545454; stroke-width: 4; stroke-linecap: round; }
.dots.small { stroke-width: 2; }

.workspace { flex: 1; min-height: 0; display: flex; }
.dock { flex: none; width: 382px; padding-right: 5px; display: flex; flex-direction: column; background: #dcdcdc; }
.pane-head { height: 26px; display: flex; align-items: center; justify-content: flex-end; background: #bababa; padding: 0 9px 1px 4px; }
.pane-head h2 { flex: 1; margin: 0; font-size: 14px; font-weight: 400; }
.close { display: flex; }
.filters { display: grid; grid-template-columns: 89px 1fr; grid-auto-rows: 20px; padding: 6px 5px 4px; background: #f0f0f0; font-size: 12px; }
.filters label { display: flex; align-items: center; gap: 4px; }
.filters .wide { grid-column: span 2; }
.filters input {
  appearance: none;
  width: 16px;
  height: 16px;
  margin: 0;
  border-radius: 3px;
  background: #005fb8;
  display: grid;
  place-items: center;
}
.filters input:checked::before { content: ""; width: 8px; height: 4px; margin-bottom: 2px; border: solid #fff; border-width: 0 0 1px 1px; rotate: -45deg; }
.dock-fill { flex: 1; border-right: 1px solid #a0a0a0; }
.mini { align-self: flex-end; width: 57px; padding-top: 5px; margin-bottom: 40px; border-top: 1px solid #a0a0a0; }
.mini-body { height: 70px; background: #f0f0f0; }

.canvas { flex: 1; min-width: 0; background: #f5f4ef; border: 1px solid #a0a0a0; overflow: hidden; }
.sheet { display: block; }
.sheet text { font: 11px "DejaVu Sans Mono", monospace; }
.sheet .net text { font-size: 12px; }
.part { fill: none; stroke: #840000; }
.wire { fill: none; stroke: #009600; }
.grid { fill: none; stroke: #b4b4b4; }
.cursor { fill: none; stroke: #7f7f7f; }
.pin-end { fill: #c88080; stroke: #b05050; stroke-width: 1; }
.net-end { fill: none; stroke: #3cae3c; }
.num { fill: #a90000; text-anchor: middle; }
.field { fill: #006464; text-anchor: middle; }
.field.left { text-anchor: start; }
.field.right { text-anchor: end; }
.net { fill: #0f0f0f; }

.messages { flex: none; height: 40px; }
.status {
  flex: none;
  height: 28px;
  display: grid;
  grid-template-columns: 585fr 97fr 204fr 321fr 233fr 76fr 215fr 188fr;
  align-items: center;
  border-top: 1px solid #dcdcdc;
  white-space: nowrap;
}
.status span { height: 20px; padding-left: 4px; border-right: 1px solid #dcdcdc; }
.status span:last-child { border: 0; }
```
FILE: grid.js
```js
// Grid dots every 74.3px; the major column and row carry longer ticks.
const pitch = 74.3, major = { x: 1025, y: 696 };
let d = "";
for (let i = -8; i < 40; i++) {
  for (let j = -8; j < 20; j++) {
    const x = Math.round(major.x + i * pitch);
    const y = Math.round(major.y + j * pitch);
    const wide = i % 10 === 0, tall = j % 10 === 0;
    d += wide ? `M${x - 1} ${y + 0.5}h3` : `M${x} ${y + 0.5}h1`;
    if (tall) d += `M${x + 0.5} ${y - 1}v3`;
  }
}
document.getElementById("grid").setAttribute("d", d);
```
